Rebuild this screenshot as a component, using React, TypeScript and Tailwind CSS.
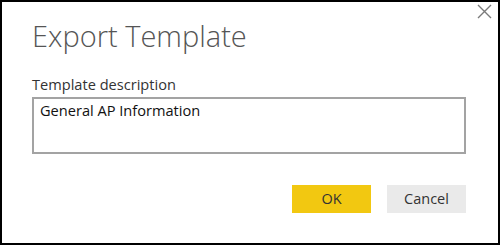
export default function App() {
  return (
    <div
      className="relative w-[500px] h-[245px] border-2 border-black bg-white flex flex-col pl-[30px] pr-[32px]"
      style={{ fontFamily: '"Open Sans", "Noto Sans", sans-serif' }}
    >
      {/* close button */}
      <button className="absolute right-[6px] top-[1px] w-[16px] h-[16px] flex items-center justify-center text-[#7a7a7a]">
        <svg width="15" height="15" viewBox="0 0 15 15" fill="none" stroke="currentColor" strokeWidth="1.4">
          <path d="M1 1L14 14M14 1L1 14" />
        </svg>
      </button>

      <h1 className="mt-[16px] text-[29px] leading-[36px] font-light text-[#555555]">Export Template</h1>

      <label className="mt-[20px] text-[14.6px] leading-[20px] text-[#333333]">Template description</label>
      <div className="mt-[3px] h-[57px] border-2 border-[#a3a3a3] pl-[6px] pt-[1px] text-[14.6px] leading-[20px] text-[#111111]">
        General AP Information
      </div>

      <div className="mt-auto mb-[30px] flex justify-end gap-[16px]">
        <button className="w-[79px] h-[28px] bg-[#f2c811] text-[14.5px] text-[#333333]">OK</button>
        <button className="w-[79px] h-[28px] bg-[#eaeaea] text-[14.5px] text-[#333333]">Cancel</button>
      </div>
    </div>
  );
}
